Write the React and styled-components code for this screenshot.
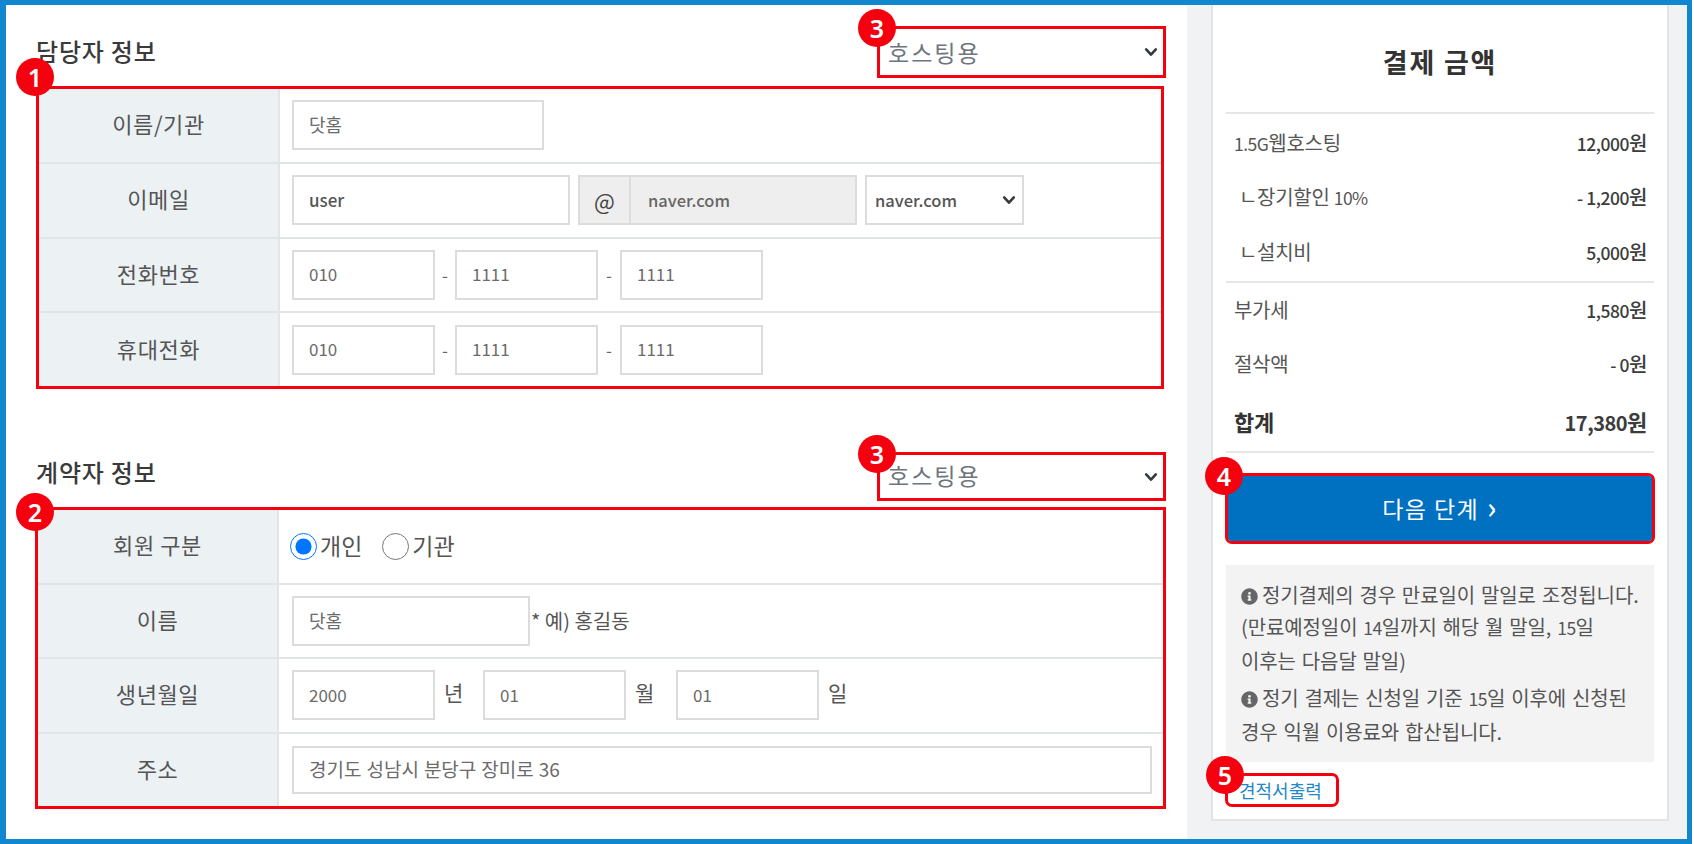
import React from 'react';
import styled, { createGlobalStyle } from 'styled-components';
import { FaInfoCircle } from 'react-icons/fa';

const FONT = '"Noto Sans CJK KR", "Noto Sans", sans-serif';
const CHEVRON = "url(\"data:image/svg+xml,%3csvg xmlns='http://www.w3.org/2000/svg' viewBox='0 0 16 16'%3e%3cpath fill='none' stroke='%23343a40' stroke-linecap='round' stroke-linejoin='round' stroke-width='3' d='M2.5 5l5.5 6 5.5-6'/%3e%3c/svg%3e\")";

const GlobalStyle = createGlobalStyle`
  html, body { margin: 0; padding: 0; background: #fff; }
  body { font-family: ${FONT}; color: #444; }
  * { box-sizing: border-box; }
`;

const Frame = styled.div`
  width: 1692px;
  height: 844px;
  border: solid #1087cf;
  border-width: 5px 5px 5px 6px;
  display: grid;
  grid-template-columns: 1181px 500px;
  overflow: hidden;
`;

const Main = styled.main`
  padding: 21px 0 0 30px;
  width: 1160px;
`;

const Section = styled.section`
  & + & { margin-top: 63px; }
`;

const SectionHead = styled.div`
  display: flex;
  justify-content: space-between;
  align-items: center;
  height: ${p => p.$h}px;
  margin-bottom: ${p => p.$gap}px;
`;

const SectionTitle = styled.h3`
  margin: 0;
  font-size: 24px;
  font-weight: 500;
  letter-spacing: 0.8px;
  color: #3a3a3a;
  line-height: 1.2;
  transform: translateY(${p => p.$shift || 0}px);
`;

// red annotation frames that sit round the real controls
const Marked = styled.div`
  position: relative;
  border: 3px solid #f5000e;
  border-radius: ${p => p.$radius || 0}px;
`;

const TableFrame = styled(Marked)`
  width: ${p => p.$w}px;
  margin-left: ${p => p.$left}px;
`;

const Badge = styled.span`
  position: absolute;
  left: ${p => p.$left}px;
  top: ${p => p.$top}px;
  width: 38px;
  height: 38px;
  border-radius: 50%;
  background: #f5000e;
  color: #fff;
  font-family: "Noto Sans", sans-serif;
  font-size: 25px;
  font-weight: 600;
  display: flex;
  align-items: center;
  justify-content: center;
  z-index: 2;
`;

const TypeSelect = styled.select`
  display: block;
  width: 283px;
  height: 100%;
  border: 0;
  outline: 0;
  appearance: none;
  background: #fff ${CHEVRON} no-repeat right 5px center / 14px 14px;
  padding: 0 0 ${p => p.$lift}px 8px;
  font-family: ${FONT};
  font-size: 23px;
  letter-spacing: 2px;
  color: #6d757d;
`;

const TypeBox = styled(Marked)`
  width: 289px;
  height: 100%;
`;

const Table = styled.div`
  width: 100%;
  height: ${p => p.$h}px;
  display: flex;
  flex-direction: column;
`;

const Row = styled.div`
  flex: 1;
  display: grid;
  grid-template-columns: 241px 1fr;
  border-bottom: 2px solid #e2e5e8;
  &:last-child { border-bottom: 0; }
`;

const Label = styled.div`
  background: #ecf1f4;
  border-right: 2px solid #e2e5e8;
  display: flex;
  align-items: center;
  justify-content: center;
  padding-bottom: 4px;
  font-size: 22px;
  letter-spacing: 0.6px;
  color: #555;
`;

const Cell = styled.div`
  display: flex;
  align-items: center;
  padding-left: ${p => p.$pad ?? 12}px;
`;

const Input = styled.input`
  width: ${p => p.$w}px;
  height: ${p => p.$h || 50}px;
  flex: none;
  border: 2px solid #dcdcdc;
  outline: 0;
  padding: 0 0 2px 15px;
  background: #fff;
  font-family: ${FONT};
  font-size: ${p => p.$size || 17}px;
  font-weight: ${p => p.$weight || 400};
  word-spacing: ${p => p.$words || 0}px;
  color: ${p => p.$color || '#6b6b6b'};
`;

const Dash = styled.span`
  width: ${p => p.$w}px;
  text-align: center;
  font-size: 17px;
  color: #666;
`;

const AtGroup = styled.div`
  width: 279px;
  height: 50px;
  margin: 0 8px;
  display: flex;
  border: 2px solid #dcdcdc;
  background: #eeeeee;
`;

const AtSign = styled.span`
  width: 51px;
  border-right: 2px solid #dcdcdc;
  display: flex;
  align-items: center;
  justify-content: center;
  font-size: 22px;
  color: #444;
`;

const AtValue = styled.span`
  padding-left: 17px;
  display: flex;
  align-items: center;
  font-size: 16.5px;
  font-weight: 500;
  color: #666;
`;

const DomainSelect = styled.select`
  width: 159px;
  height: 50px;
  border: 2px solid #dcdcdc;
  outline: 0;
  appearance: none;
  background: #fff ${CHEVRON} no-repeat right 6px center / 14px 14px;
  padding: 0 0 0 8px;
  font-family: ${FONT};
  font-size: 16.5px;
  font-weight: 500;
  color: #555;
`;

const RadioLabel = styled.label`
  display: flex;
  align-items: center;
  gap: 3px;
  margin-right: 20px;
  padding-bottom: 2px;
  font-size: 23px;
  color: #555;
`;

const Radio = styled.input`
  width: 27px;
  height: 27px;
  margin: 2px 0 0;
  accent-color: #0075ff;
`;

const Hint = styled.span`
  margin-left: 1px;
  font-size: 20px;
  color: #555;
`;

const Unit = styled.span`
  width: ${p => p.$w || 48}px;
  padding-left: 9px;
  font-size: 21px;
  color: #555;
  transform: translateY(-3px);
`;

const Side = styled.aside`
  background: #f0f2f4;
  padding: 0 18px 18px 24px;
`;

const Card = styled.div`
  height: 100%;
  background: #fff;
  border: 2px solid #e3e3e3;
  border-top: 0;
  padding: 0 13px;
`;

const CardTitle = styled.h2`
  margin: 0;
  height: 109px;
  padding-top: 5px;
  display: flex;
  align-items: center;
  justify-content: center;
  border-bottom: 2px solid #e6e6e6;
  font-size: 27px;
  font-weight: 700;
  letter-spacing: 1.8px;
  color: #333;
`;

const Lines = styled.div`
  border-bottom: 2px solid #e6e6e6;
  padding: ${p => p.$pad || '0'};
`;

const Line = styled.div`
  height: ${p => p.$h || 54.5}px;
  display: flex;
  align-items: center;
  justify-content: space-between;
  padding: 0 7px 0 8px;
  font-size: ${p => p.$big ? 22 : 20}px;
  font-weight: ${p => p.$big ? 700 : 400};
  letter-spacing: -0.3px;
  color: ${p => p.$big ? '#333' : '#555'};
`;

const Amount = styled.span`
  font-weight: ${p => p.$big ? 700 : 500};
  color: #3c3c3c;
`;

// digits and latin run narrower than the hangul round them
const Num = styled.span`
  font-size: ${p => p.$size || 17.5}px;
  letter-spacing: -0.5px;
`;

const Indent = styled.span`
  padding-left: 5px;
`;

const NextBox = styled(Marked)`
  margin: 20px -1px 0;
  height: 71px;
`;

const NextButton = styled.button`
  width: 100%;
  height: 100%;
  border: 0;
  border-radius: 3px;
  background: #0070c0;
  color: #fff;
  font-family: ${FONT};
  font-size: 23px;
  letter-spacing: 1.4px;
  display: flex;
  align-items: center;
  justify-content: center;
  gap: 8px;
`;

const NextArrow = styled.span`
  font-size: 30px;
  font-weight: 500;
  line-height: 1;
  transform: translateY(-2px);
`;

const Note = styled.div`
  margin-top: 21px;
  height: 197px;
  background: #f3f3f4;
  padding: 14px 10px 0 15px;
  font-size: 20px;
  line-height: 32.5px;
  word-spacing: 1.5px;
  letter-spacing: -0.1px;
  color: #555;
  & p { margin: 0 0 5px; white-space: nowrap; }
  & svg { vertical-align: -2px; margin-right: 4px; color: #666; }
`;

const PrintBox = styled(Marked)`
  margin: 11px 0 0 -1px;
  width: 114px;
  height: 34px;
  display: flex;
  align-items: center;
  padding-left: 11px;
`;

const PrintLink = styled.a`
  font-size: 18px;
  color: #1e88c9;
  text-decoration: none;
  white-space: nowrap;
`;

const TypeHead = ({ title, height, gap, shift, lift }) => (
  <SectionHead $h={height} $gap={gap}>
    <SectionTitle $shift={shift}>{title}</SectionTitle>
    <TypeBox>
      <Badge $left={-22} $top={-20}>3</Badge>
      <TypeSelect $lift={lift} defaultValue="호스팅용">
        <option>호스팅용</option>
      </TypeSelect>
    </TypeBox>
  </SectionHead>
);

const Phone = ({ first }) => (
  <>
    <Input $w={143} defaultValue={first} />
    <Dash $w={20}>-</Dash>
    <Input $w={143} defaultValue="1111" />
    <Dash $w={22}>-</Dash>
    <Input $w={143} defaultValue="1111" />
  </>
);

const App = () => (
  <>
    <GlobalStyle />
    <Frame>
      <Main>
        <Section>
          <TypeHead title="담당자 정보" height={52} gap={8} shift={-1} lift={0} />
          <TableFrame $w={1128} $left={0}>
            <Badge $left={-23} $top={-31}>1</Badge>
            <Table $h={297}>
              <Row>
                <Label>이름/기관</Label>
                <Cell><Input $w={252} $size={18} defaultValue="닷홈" /></Cell>
              </Row>
              <Row>
                <Label>이메일</Label>
                <Cell>
                  <Input $w={278} $weight={500} $color="#555" defaultValue="user" />
                  <AtGroup>
                    <AtSign>@</AtSign>
                    <AtValue>naver.com</AtValue>
                  </AtGroup>
                  <DomainSelect defaultValue="naver.com">
                    <option>naver.com</option>
                  </DomainSelect>
                </Cell>
              </Row>
              <Row>
                <Label>전화번호</Label>
                <Cell><Phone first="010" /></Cell>
              </Row>
              <Row>
                <Label>휴대전화</Label>
                <Cell><Phone first="010" /></Cell>
              </Row>
            </Table>
          </TableFrame>
        </Section>

        <Section>
          <TypeHead title="계약자 정보" height={49} gap={6} shift={-4} lift={3} />
          <TableFrame $w={1131} $left={-1}>
            <Badge $left={-22} $top={-17}>2</Badge>
            <Table $h={296}>
              <Row>
                <Label>회원 구분</Label>
                <Cell $pad={11}>
                  <RadioLabel><Radio type="radio" name="kind" defaultChecked />개인</RadioLabel>
                  <RadioLabel><Radio type="radio" name="kind" />기관</RadioLabel>
                </Cell>
              </Row>
              <Row>
                <Label>이름</Label>
                <Cell $pad={13}>
                  <Input $w={238} $size={18} defaultValue="닷홈" />
                  <Hint>* 예) 홍길동</Hint>
                </Cell>
              </Row>
              <Row>
                <Label>생년월일</Label>
                <Cell $pad={13}>
                  <Input $w={143} defaultValue="2000" />
                  <Unit>년</Unit>
                  <Input $w={143} defaultValue="01" />
                  <Unit $w={50}>월</Unit>
                  <Input $w={143} defaultValue="01" />
                  <Unit>일</Unit>
                </Cell>
              </Row>
              <Row>
                <Label>주소</Label>
                <Cell $pad={13}><Input $w={860} $h={48} $size={19} $words={0.75} defaultValue="경기도 성남시 분당구 장미로 36" /></Cell>
              </Row>
            </Table>
          </TableFrame>
        </Section>
      </Main>

      <Side>
        <Card>
          <CardTitle>결제 금액</CardTitle>
          <Lines $pad="1px 0 2px">
            <Line><span><Num>1.5G</Num>웹호스팅</span><Amount><Num>12,000</Num>원</Amount></Line>
            <Line><Indent>ㄴ장기할인 <Num>10%</Num></Indent><Amount><Num>- 1,200</Num>원</Amount></Line>
            <Line><Indent>ㄴ설치비</Indent><Amount><Num>5,000</Num>원</Amount></Line>
          </Lines>
          <Lines>
            <Line $h={54}><span>부가세</span><Amount><Num>1,580</Num>원</Amount></Line>
            <Line $h={54}><span>절삭액</span><Amount><Num>- 0</Num>원</Amount></Line>
            <Line $h={60} $big><span>합계</span><Amount $big><Num $size={20}>17,380</Num>원</Amount></Line>
          </Lines>
          <NextBox $radius={7}>
            <Badge $left={-23} $top={-19}>4</Badge>
            <NextButton type="button">다음 단계<NextArrow>›</NextArrow></NextButton>
          </NextBox>
          <Note>
            <p>
              <FaInfoCircle size={17} />정기결제의 경우 만료일이 말일로 조정됩니다.<br />
              (만료예정일이 <Num>14</Num>일까지 해당 월 말일, <Num>15</Num>일<br />
              이후는 다음달 말일)
            </p>
            <p>
              <FaInfoCircle size={17} />정기 결제는 신청일 기준 <Num>15</Num>일 이후에 신청된<br />
              경우 익월 이용료와 합산됩니다.
            </p>
          </Note>
          <PrintBox $radius={7}>
            <Badge $left={-22} $top={-20}>5</Badge>
            <PrintLink href="#">견적서출력</PrintLink>
          </PrintBox>
        </Card>
      </Side>
    </Frame>
  </>
);

export default App;
